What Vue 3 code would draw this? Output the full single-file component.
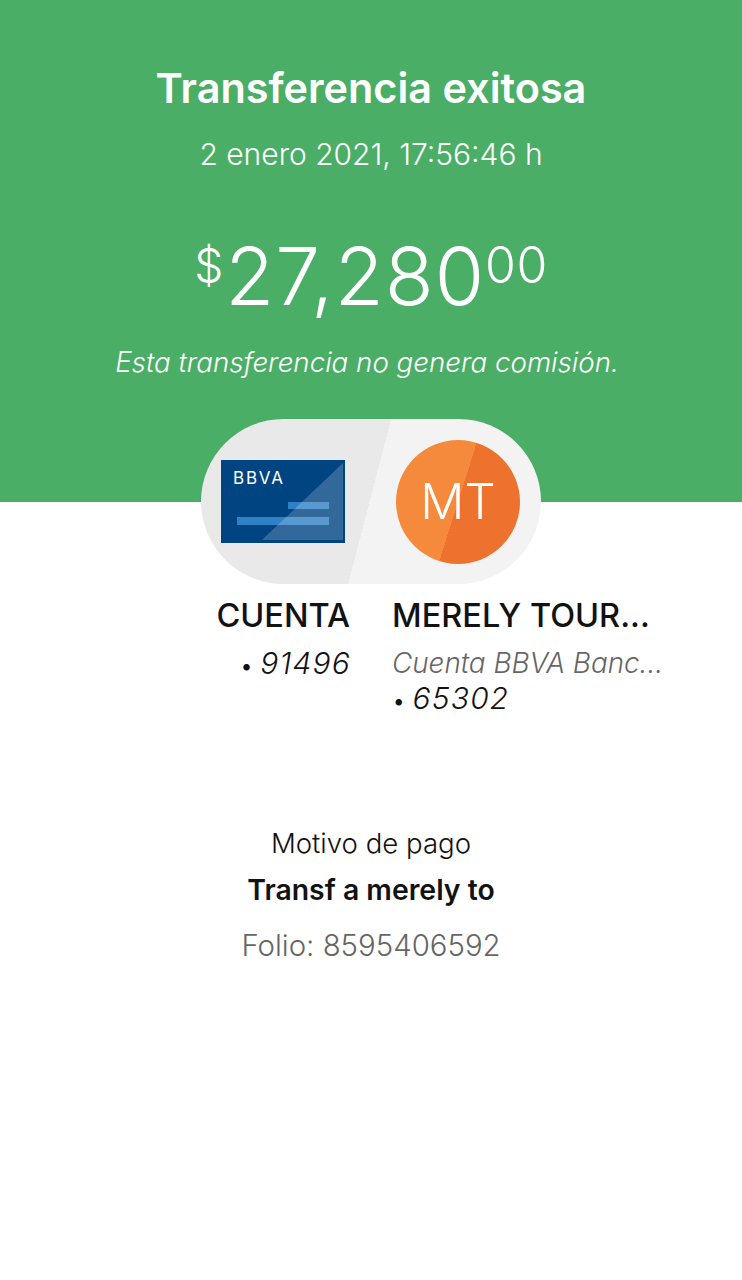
<script setup>
const origin = { title: "CUENTA", number: "91496" };
const destination = {
  title: "MERELY TOUR...",
  bank: "Cuenta BBVA Banc...",
  number: "65302",
};
</script>

<template>
  <div class="page">
    <header class="hero">
      <h1 class="hero-title">Transferencia exitosa</h1>
      <p class="hero-date">2 enero 2021, 17:56:46 h</p>
      <div class="amount">
        <span class="amount-sign">$</span>
        <span class="amount-main">27,280</span>
        <span class="amount-cents">00</span>
      </div>
      <p class="hero-note">Esta transferencia no genera comisión.</p>
    </header>

    <div class="pill">
      <svg class="card" width="124" height="83" viewBox="0 0 124 83">
        <rect width="124" height="83" fill="#004481" />
        <rect x="67" y="42" width="41" height="7" fill="#2f80c4" />
        <rect x="16" y="57" width="92" height="8" fill="#2f80c4" />
        <path d="M122 3V80H41Z" fill="#fff" fill-opacity="0.2" />
        <text x="12" y="24" class="card-brand">BBVA</text>
      </svg>
      <div class="avatar">MT</div>
    </div>

    <section class="parties">
      <div class="party party-from">
        <div class="party-title">{{ origin.title }}</div>
        <div class="party-number"><span class="dot">•</span>{{ origin.number }}</div>
      </div>
      <div class="party">
        <div class="party-title">{{ destination.title }}</div>
        <div class="party-bank">{{ destination.bank }}</div>
        <div class="party-number"><span class="dot">•</span>{{ destination.number }}</div>
      </div>
    </section>

    <section class="details">
      <div class="details-label">Motivo de pago</div>
      <div class="details-value">Transf a merely to</div>
      <div class="details-folio">Folio: 8595406592</div>
    </section>
  </div>
</template>

<style>
html,
body {
  background: #fff;
}
</style>

<style scoped>
.page {
  width: 742px;
  height: 1280px;
  overflow: hidden;
  background: #fff;
  font-family: Inter, "Liberation Sans", sans-serif;
  color: #121212;
}

.hero {
  height: 502px;
  box-sizing: border-box;
  padding-top: 64px;
  background: #4bae66;
  color: #fff;
  text-align: center;
}

.hero-title {
  margin: 0;
  font-size: 41.4px;
  line-height: 48px;
  font-weight: 600;
}

.hero-date {
  margin: 24px 0 0;
  font-size: 30px;
  line-height: 36px;
  font-weight: 300;
}

.amount {
  display: flex;
  justify-content: center;
  align-items: flex-start;
  margin-top: 59px;
  height: 90px;
  font-weight: 300;
}

.amount-sign {
  font-size: 46px;
  line-height: 69px;
  margin-right: 2px;
}

.amount-main {
  font-size: 80px;
  line-height: 90px;
  letter-spacing: 1px;
}

.amount-cents {
  font-size: 50px;
  line-height: 69px;
  letter-spacing: 0.5px;
}

.hero-note {
  margin: 23px 0 0;
  padding-right: 8px;
  font-size: 27.7px;
  line-height: 36px;
  font-weight: 300;
  font-style: italic;
}

.pill {
  display: flex;
  align-items: center;
  justify-content: space-between;
  box-sizing: border-box;
  width: 340px;
  height: 165px;
  margin: -83px 0 0 201px;
  padding: 0 21px 0 20px;
  border-radius: 83px;
  background: linear-gradient(104.6deg, #e9e9e9 184px, #f3f3f3 184px);
}

.card {
  display: block;
}

.card-brand {
  font-size: 17px;
  font-weight: 400;
  letter-spacing: 1.8px;
  fill: #fff;
}

.avatar {
  width: 124px;
  height: 124px;
  border-radius: 50%;
  display: flex;
  align-items: center;
  justify-content: center;
  background: linear-gradient(107.5deg, #f68a3c 50%, #ec722e 50%);
  color: #fff;
  font-size: 49px;
  font-weight: 300;
}

.parties {
  display: grid;
  grid-template-columns: 150px 290px;
  column-gap: 42px;
  margin: 12px 0 0 200px;
}

.party-from {
  text-align: right;
}

.party-title {
  font-size: 32.5px;
  line-height: 40px;
  font-weight: 500;
}

.party-bank {
  margin-top: 9px;
  font-size: 27.8px;
  line-height: 36px;
  font-style: italic;
  font-weight: 300;
  color: #666;
}

.party-number {
  font-size: 30px;
  line-height: 35px;
  letter-spacing: 1.2px;
  font-style: italic;
  font-weight: 300;
}

.party-from .party-number {
  margin-top: 10px;
  margin-right: -1px;
}

.dot {
  display: inline-block;
  margin-right: 7px;
  font-size: 24px;
  font-style: normal;
  letter-spacing: 0;
}

.details {
  margin-top: 107px;
  text-align: center;
}

.details-label {
  font-size: 27.6px;
  line-height: 36px;
  font-weight: 300;
}

.details-value {
  margin-top: 11px;
  font-size: 28.4px;
  line-height: 36px;
  font-weight: 600;
}

.details-folio {
  margin-top: 20px;
  font-size: 29.4px;
  line-height: 36px;
  font-weight: 300;
  color: #666;
}
</style>
